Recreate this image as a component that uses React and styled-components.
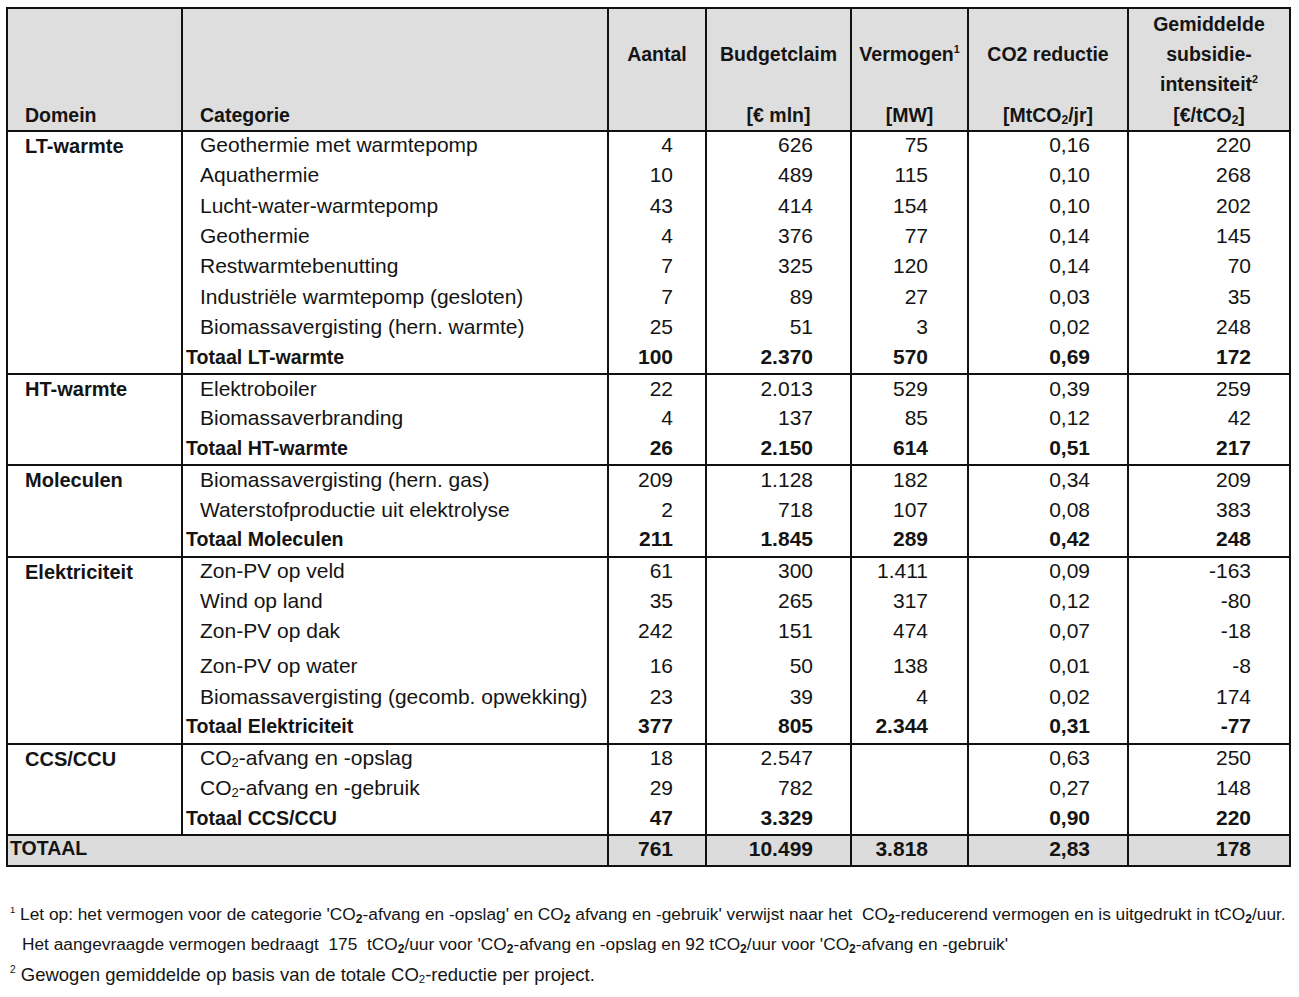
import React from 'react';
import styled, { createGlobalStyle } from 'styled-components';

const groups = [
  {
    domein: 'LT-warmte',
    rows: [
      ['Geothermie met warmtepomp', '4', '626', '75', '0,16', '220'],
      ['Aquathermie', '10', '489', '115', '0,10', '268'],
      ['Lucht-water-warmtepomp', '43', '414', '154', '0,10', '202'],
      ['Geothermie', '4', '376', '77', '0,14', '145'],
      ['Restwarmtebenutting', '7', '325', '120', '0,14', '70'],
      ['Industriële warmtepomp (gesloten)', '7', '89', '27', '0,03', '35'],
      ['Biomassavergisting (hern. warmte)', '25', '51', '3', '0,02', '248'],
    ],
    total: ['Totaal LT-warmte', '100', '2.370', '570', '0,69', '172'],
  },
  {
    domein: 'HT-warmte',
    rows: [
      ['Elektroboiler', '22', '2.013', '529', '0,39', '259'],
      ['Biomassaverbranding', '4', '137', '85', '0,12', '42'],
    ],
    total: ['Totaal HT-warmte', '26', '2.150', '614', '0,51', '217'],
  },
  {
    domein: 'Moleculen',
    rows: [
      ['Biomassavergisting (hern. gas)', '209', '1.128', '182', '0,34', '209'],
      ['Waterstofproductie uit elektrolyse', '2', '718', '107', '0,08', '383'],
    ],
    total: ['Totaal Moleculen', '211', '1.845', '289', '0,42', '248'],
  },
  {
    domein: 'Elektriciteit',
    rows: [
      ['Zon-PV op veld', '61', '300', '1.411', '0,09', '-163'],
      ['Wind op land', '35', '265', '317', '0,12', '-80'],
      ['Zon-PV op dak', '242', '151', '474', '0,07', '-18'],
      ['Zon-PV op water', '16', '50', '138', '0,01', '-8', true],
      ['Biomassavergisting (gecomb. opwekking)', '23', '39', '4', '0,02', '174'],
    ],
    total: ['Totaal Elektriciteit', '377', '805', '2.344', '0,31', '-77'],
  },
  {
    domein: 'CCS/CCU',
    rows: [
      ['CO2-afvang en -opslag', '18', '2.547', '', '0,63', '250'],
      ['CO2-afvang en -gebruik', '29', '782', '', '0,27', '148'],
    ],
    total: ['Totaal CCS/CCU', '47', '3.329', '', '0,90', '220'],
  },
];

const colWidths = [175, 426, 98, 145, 117, 160, 162];
const numPad = [32, 37, 39, 37, 38];

const GlobalStyle = createGlobalStyle`
  body {
    margin: 0;
    background: #ffffff;
    font-family: "Liberation Sans", Arial, sans-serif;
    color: #141414;
  }
`;

const Page = styled.div`
  padding: 7px 0 0 6px;
  width: 1283px;
`;

const Table = styled.table`
  border-collapse: collapse;
  table-layout: fixed;
  width: 1283px;
  border: 2px solid #111;
`;

const HeadRow = styled.tr`
  background: #dedede;
  border-bottom: 2px solid #111;
`;

const HeadCell = styled.th`
  padding: 0;
  padding-left: ${(p) => (p.$left ? '17px' : '0')};
  border-left: 2px solid #111;
  height: 119px;
  vertical-align: top;
  font-size: 19.5px;
  font-weight: bold;
`;

const HeadStack = styled.div`
  display: grid;
  grid-template-rows: repeat(4, 30.3px);
  align-items: center;
  justify-items: ${(p) => (p.$left ? 'start' : 'center')};
  white-space: nowrap;
`;

const Group = styled.tbody`
  border-bottom: 2px solid #111;
`;

const Row = styled.tr`
  height: ${(p) => (p.$tall ? '35px' : '30.4px')};

  & > td {
    padding-top: ${(p) => (p.$tall ? '5px' : '0')};
  }
`;

const DomainCell = styled.td`
  vertical-align: top;
  padding: 0 0 0 17px;
  font-weight: bold;
  font-size: 20px;
  line-height: 28px;
  border-left: 2px solid #111;
`;

const CatCell = styled.td`
  padding: 0 0 3px ${(p) => (p.$total ? '3px' : '17px')};
  font-size: ${(p) => (p.$total ? '19.6px' : '21px')};
  font-weight: ${(p) => (p.$total ? 'bold' : 'normal')};
  border-left: 2px solid #111;
  white-space: nowrap;
  vertical-align: middle;
  line-height: 26px;
`;

const NumCell = styled.td`
  text-align: right;
  padding: 0 ${(p) => p.$pad}px 3px 0;
  font-size: 21px;
  font-weight: ${(p) => (p.$bold ? 'bold' : 'normal')};
  border-left: 2px solid #111;
  white-space: nowrap;
  vertical-align: middle;
  line-height: 26px;
`;

const TotalRow = styled.tr`
  background: #dcdcdc;
  height: 29px;
`;

const TotalLabel = styled.td`
  padding: 0 0 3px 2px;
  font-weight: bold;
  font-size: 19.5px;
  border-left: 2px solid #111;
  vertical-align: middle;
`;

const Sub = styled.sub`
  font-size: 0.62em;
  vertical-align: -0.15em;
  line-height: 0;
`;

const Sup = styled.sup`
  font-size: 0.55em;
  vertical-align: 0.75em;
  line-height: 0;
`;

const Notes = styled.div`
  margin-top: 32px;
  padding-left: 4px;
  line-height: 30.5px;
  white-space: nowrap;
`;

const NoteLine = styled.div`
  padding-left: ${(p) => p.$indent || 0}px;
  font-size: ${(p) => (p.$wide ? '18.5px' : '17.3px')};
`;

const NoteSub = styled.sub`
  font-size: 0.7em;
  font-weight: bold;
  vertical-align: -0.25em;
  line-height: 0;
`;

const co2 = (s) => {
  if (!s.startsWith('CO2')) return s;
  return (
    <>
      CO<Sub>2</Sub>
      {s.slice(3)}
    </>
  );
};

const Co2 = () => (
  <>
    CO<NoteSub>2</NoteSub>
  </>
);

export default function App() {
  return (
    <Page>
      <GlobalStyle />
      <Table>
        <colgroup>
          {colWidths.map((w, i) => (
            <col key={i} style={{ width: w }} />
          ))}
        </colgroup>
        <thead>
          <HeadRow>
            <HeadCell $left>
              <HeadStack $left>
                <span />
                <span />
                <span />
                <span>Domein</span>
              </HeadStack>
            </HeadCell>
            <HeadCell $left>
              <HeadStack $left>
                <span />
                <span />
                <span />
                <span>Categorie</span>
              </HeadStack>
            </HeadCell>
            <HeadCell>
              <HeadStack>
                <span />
                <span>Aantal</span>
              </HeadStack>
            </HeadCell>
            <HeadCell>
              <HeadStack>
                <span />
                <span>Budgetclaim</span>
                <span />
                <span>[€ mln]</span>
              </HeadStack>
            </HeadCell>
            <HeadCell>
              <HeadStack>
                <span />
                <span>
                  Vermogen<Sup>1</Sup>
                </span>
                <span />
                <span>[MW]</span>
              </HeadStack>
            </HeadCell>
            <HeadCell>
              <HeadStack>
                <span />
                <span>CO2 reductie</span>
                <span />
                <span>
                  [MtCO<Sub>2</Sub>/jr]
                </span>
              </HeadStack>
            </HeadCell>
            <HeadCell>
              <HeadStack>
                <span>Gemiddelde</span>
                <span>subsidie-</span>
                <span>
                  intensiteit<Sup>2</Sup>
                </span>
                <span>
                  [€/tCO<Sub>2</Sub>]
                </span>
              </HeadStack>
            </HeadCell>
          </HeadRow>
        </thead>
        {groups.map((g) => (
          <Group key={g.domein}>
            {g.rows.map((r, i) => (
              <Row key={r[0]} $tall={r[6]}>
                {i === 0 && <DomainCell rowSpan={g.rows.length + 1}>{g.domein}</DomainCell>}
                <CatCell>{co2(r[0])}</CatCell>
                {r.slice(1, 6).map((v, j) => (
                  <NumCell key={j} $pad={numPad[j]}>
                    {v}
                  </NumCell>
                ))}
              </Row>
            ))}
            <Row>
              <CatCell $total>{g.total[0]}</CatCell>
              {g.total.slice(1).map((v, j) => (
                <NumCell key={j} $pad={numPad[j]} $bold>
                  {v}
                </NumCell>
              ))}
            </Row>
          </Group>
        ))}
        <tbody>
          <TotalRow>
            <TotalLabel colSpan={2}>TOTAAL</TotalLabel>
            {['761', '10.499', '3.818', '2,83', '178'].map((v, j) => (
              <NumCell key={j} $pad={numPad[j]} $bold>
                {v}
              </NumCell>
            ))}
          </TotalRow>
        </tbody>
      </Table>
      <Notes>
        <NoteLine>
          <Sup>1</Sup> Let op: het vermogen voor de categorie '<Co2 />-afvang en -opslag' en <Co2 /> afvang en
          -gebruik' verwijst naar het&nbsp; <Co2 />-reducerend vermogen en is uitgedrukt in t<Co2 />/uur.
        </NoteLine>
        <NoteLine $indent={12}>
          Het aangevraagde vermogen bedraagt&nbsp; 175&nbsp; t<Co2 />/uur voor '<Co2 />-afvang en -opslag en 92 t
          <Co2 />/uur voor '<Co2 />-afvang en -gebruik'
        </NoteLine>
        <NoteLine $wide>
          <Sup>2</Sup> Gewogen gemiddelde op basis van de totale CO<Sub>2</Sub>-reductie per project.
        </NoteLine>
      </Notes>
    </Page>
  );
}
